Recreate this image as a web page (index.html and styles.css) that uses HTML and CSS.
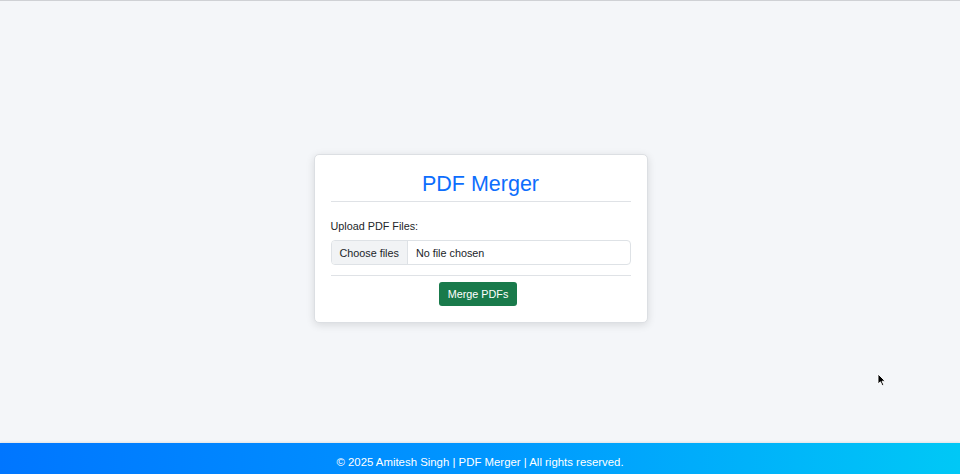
FILE: index.html
```html
<!DOCTYPE html>
<html lang="en">
<head>
<meta charset="utf-8">
<title>PDF Merger</title>
<link rel="stylesheet" href="styles.css">
</head>
<body>
<main class="main">
  <div class="card">
    <h2 class="title">PDF Merger</h2>
    <hr class="rule rule-top">
    <form class="form">
      <label class="label" for="files">Upload PDF Files:</label>
      <div class="file-input">
        <span class="file-btn">Choose files</span>
        <span class="file-name">No file chosen</span>
      </div>
      <hr class="rule rule-bottom">
      <div class="actions">
        <button type="button" class="btn">Merge PDFs</button>
      </div>
    </form>
  </div>
</main>
<footer class="footer">© 2025 Amitesh Singh | PDF Merger | All rights reserved.</footer>
<svg class="cursor" width="10" height="14" viewBox="0 0 10 14" aria-hidden="true">
  <path d="M1 1 L1 11 L3.4 8.8 L5.2 12.6 L6.8 11.9 L5.1 8.2 L8.2 8.2 Z" fill="#000" stroke="#fff" stroke-width="0.9" stroke-linejoin="round"/>
</svg>
</body>
</html>
```

FILE: styles.css
```css
* { box-sizing: border-box; }
html, body { margin: 0; padding: 0; }
body {
  height: 474px;
  display: flex;
  flex-direction: column;
  background: #f4f6f9;
  border-top: 1px solid #cfd1d5;
  font-family: "Liberation Sans", Arial, Helvetica, sans-serif;
  color: #212529;
  overflow: hidden;
  position: relative;
}
.main {
  flex: 1;
  display: flex;
  justify-content: center;
  align-items: center;
  padding-top: 33px;
  padding-left: 1px;
}
.card {
  width: 334px;
  background: #ffffff;
  border: 1px solid #dcdfe3;
  border-radius: 5px;
  box-shadow: 0 2px 8px rgba(0, 0, 0, 0.12);
  padding: 16px;
}
.title {
  margin: 0;
  font-size: 21.5px;
  line-height: 26px;
  font-weight: 400;
  color: #0d6efd;
  text-align: center;
}
.rule {
  border: 0;
  border-top: 1px solid #dfe2e6;
  margin: 0;
}
.rule-top { margin-top: 4px; }
.form { display: flex; flex-direction: column; }
.label {
  margin-top: 16px;
  font-size: 10.8px;
  line-height: 16px;
  height: 16px;
}
.file-input {
  margin-top: 6px;
  height: 25px;
  display: flex;
  border: 1px solid #dee2e6;
  border-radius: 4px;
  overflow: hidden;
  font-size: 10.8px;
}
.file-btn {
  display: flex;
  align-items: center;
  padding: 0 8px;
  background: #f1f3f5;
  border-right: 1px solid #dee2e6;
  color: #212529;
}
.file-name {
  display: flex;
  align-items: center;
  padding-left: 8px;
  color: #212529;
}
.rule-bottom { margin-top: 10px; }
.actions {
  display: flex;
  justify-content: center;
  margin-top: 6px;
  padding-right: 5px;
}
.btn {
  height: 24px;
  padding: 0 9px;
  border: 0;
  border-radius: 3px;
  background: #197a4b;
  color: #ffffff;
  font-family: inherit;
  font-size: 10.8px;
}
.footer {
  height: 31px;
  flex: none;
  background: linear-gradient(90deg, #0076ff 0%, #0096ff 50%, #00c8f6 100%);
  box-shadow: 0 -1px 2px rgba(0, 0, 0, 0.08);
  color: #ffffff;
  font-size: 11.4px;
  text-align: center;
  padding-top: 12px;
  line-height: 14px;
}
.cursor {
  position: absolute;
  left: 877px;
  top: 372px;
}
```
